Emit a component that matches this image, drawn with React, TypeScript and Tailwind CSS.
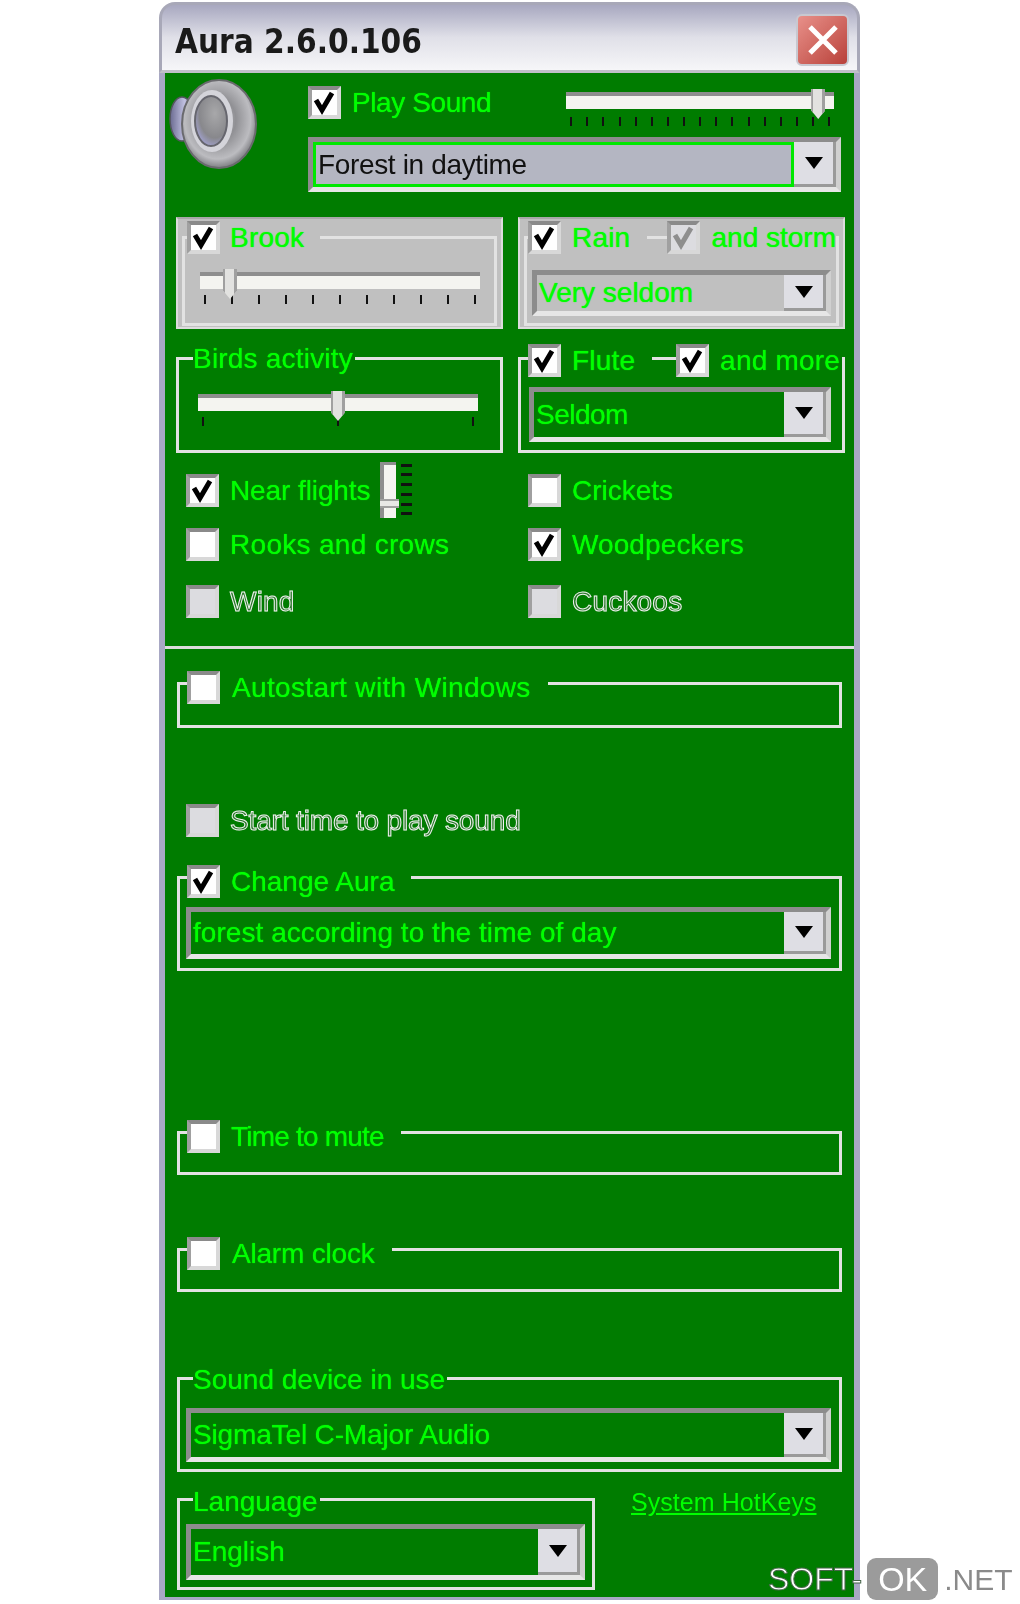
import React from "react";

const G = "bg-[#007c00]";
const S = "bg-[#c0c0c0]";

function Check({ on, disabled, gray }: { on?: boolean; disabled?: boolean; gray?: boolean }) {
  return (
    <div className={`w-[33px] h-[33px] flex-none flex items-center justify-center border-[4px] border-t-[#8a8a8a] border-l-[#a0a0a0] border-b-[#d8d8d8] border-r-[#d8d8d8] ${disabled || gray ? "bg-[#dcdce0]" : "bg-white"}`}>
      {on && (
        <svg width="25" height="25" viewBox="0 0 25 25">
          <path d="M4 10 L10 20 L20 3" fill="none" stroke={disabled ? "#8e8e8e" : "#000"} strokeWidth="5" />
        </svg>
      )}
    </div>
  );
}

function Label({ children, off, tr = "tracking-[0.2px]" }: { children: React.ReactNode; off?: boolean; tr?: string }) {
  return (
    <span className={`text-[28px] leading-[33px] whitespace-nowrap ${tr} ${off ? "text-[#2f7a2f] [-webkit-text-stroke:1px_#f2f2f2]" : "text-[#00ff00] [text-shadow:0_0_1px_#00ff00]"}`}>
      {children}
    </span>
  );
}

function Combo({ children, w, h, fill = "", focus, dark, tr = "" }: { children: React.ReactNode; w: string; h: string; fill?: string; focus?: boolean; dark?: boolean; tr?: string }) {
  return (
    <div className={`${w} ${h} flex items-stretch flex-none border-[5px] border-t-[#8c8c8c] border-l-[#8c8c8c] border-b-[#e6e6e6] border-r-[#d0d0d0]`}>
      <div className={`flex-1 flex items-center pl-[2px] ${fill} ${focus ? "border-[3px] border-[#00e800]" : ""}`}>
        <span className={`text-[28px] whitespace-nowrap ${tr} ${dark ? "text-[#111]" : "text-[#00ff00] [text-shadow:0_0_1px_#00ff00]"}`}>{children}</span>
      </div>
      <div className="w-[42px] flex-none flex items-center justify-center bg-[#dedee4] border-b-[3px] border-r-[3px] border-b-[#9a9a9a] border-r-[#9a9a9a]">
        <svg width="18" height="12" viewBox="0 0 18 12"><path d="M0 0 H18 L9 12 Z" fill="#000" /></svg>
      </div>
    </div>
  );
}

function Slider({ w, ticks, pos, gap = "mt-[6px]" }: { w: string; ticks: number; pos: string; gap?: string }) {
  return (
    <div className={`${w} flex-none`}>
      <div className="relative h-[17px] bg-[#f4f4f0] border-t-[4px] border-[#8e8e8e]">
        <div className={`absolute ${pos} -top-[7px] w-[14px] h-[30px] bg-[#e2e2e0] border-l-[2px] border-r-[3px] border-[#a0a0a0] [clip-path:polygon(0_0,100%_0,100%_72%,50%_100%,0_72%)]`} />
      </div>
      <div className={`flex justify-between px-[4px] ${gap}`}>
        {Array.from({ length: ticks }).map((_, i) => (
          <div key={i} className="w-[2px] h-[9px] bg-[#111]" />
        ))}
      </div>
    </div>
  );
}

function Group({ header, children, h, w = "w-[665px]", mt = "", fullHeader, hm = "-mt-[16px]", ml = "ml-[5px]" }: { header: React.ReactNode; children?: React.ReactNode; h: string; w?: string; mt?: string; fullHeader?: boolean; hm?: string; ml?: string }) {
  return (
    <div className={`${w} ${h} ${mt} flex-none border-[3px] border-[#e2e2e2]`}>
      <div className={`${hm} ${ml} h-[33px] flex items-center ${fullHeader ? "" : "w-fit"}`}>{header}</div>
      {children}
    </div>
  );
}

function Seg({ children, bg = G, cls = "" }: { children: React.ReactNode; bg?: string; cls?: string }) {
  return <div className={`flex items-center h-[33px] flex-none ${bg} ${cls}`}>{children}</div>;
}

function Item({ on, gray, text, off, extra, tr }: { on?: boolean; gray?: boolean; text: string; off?: boolean; extra?: React.ReactNode; tr?: string }) {
  return (
    <div className="flex items-center h-[33px] gap-[11px]">
      <Check on={on} gray={gray} />
      <Label off={off} tr={tr}>{text}</Label>
      {extra}
    </div>
  );
}

function Speaker() {
  return (
    <svg width="92" height="94" viewBox="0 0 92 94" className="flex-none">
      <defs>
        <radialGradient id="cone" cx="0.48" cy="0.45" r="0.62">
          <stop offset="0" stopColor="#c0c0c4" />
          <stop offset="0.4" stopColor="#909094" />
          <stop offset="0.72" stopColor="#bcbcc0" />
          <stop offset="1" stopColor="#55565a" />
        </radialGradient>
        <radialGradient id="cap" cx="0.62" cy="0.35" r="0.75">
          <stop offset="0" stopColor="#a8a8aa" />
          <stop offset="0.65" stopColor="#88888c" />
          <stop offset="1" stopColor="#a8a8e0" />
        </radialGradient>
        <linearGradient id="back" x1="0" y1="0" x2="1" y2="0">
          <stop offset="0" stopColor="#6a6a90" />
          <stop offset="0.6" stopColor="#c0c0e0" />
          <stop offset="1" stopColor="#9090b0" />
        </linearGradient>
      </defs>
      <ellipse cx="13" cy="42" rx="12" ry="22" fill="url(#back)" stroke="#55555f" strokeWidth="1.5" />
      <ellipse cx="50" cy="47" rx="37" ry="44" fill="url(#cone)" stroke="#6a6a6e" strokeWidth="2" />
      <ellipse cx="43" cy="44" rx="21" ry="31" fill="#d4d4da" />
      <ellipse cx="42" cy="44" rx="16" ry="25" fill="url(#cap)" stroke="#66666e" strokeWidth="2" />
    </svg>
  );
}

export default function App() {
  return (
    <div className="relative w-[1020px] h-[1604px] bg-white overflow-hidden font-['Liberation_Sans',sans-serif]">
      <div className="ml-[159px] pt-[2px] w-[701px] blur-[0.5px]">
        <div className="h-[71px] rounded-t-[16px] border-x-[3px] border-t-[3px] border-[#a8a8b8] bg-gradient-to-b from-[#a8a8c0] via-[#e0e0e8] to-[#f6f6f8] flex items-center justify-between pl-[13px] pr-[8px] border-b-[3px] border-b-[#c0c0c8]">
          <span className="font-['DejaVu_Sans',sans-serif] font-bold text-[33px] [font-stretch:condensed] tracking-[0px] text-[#1a1a1a] pt-[8px]">Aura 2.6.0.106</span>
          <div className="w-[53px] h-[52px] rounded-[6px] bg-gradient-to-br from-[#e8908a] to-[#b8403a] border-[2px] border-[#c8c8d0] flex items-center justify-center mt-[4px]">
            <svg width="34" height="34" viewBox="0 0 34 34"><path d="M4 4 L30 30 M30 4 L4 30" stroke="#fff" strokeWidth="5" /></svg>
          </div>
        </div>

        <div className={`h-[1527px] ${G} border-x-[6px] border-b-[3px] border-[#a8a8c4] pl-[11px] pr-[9px]`}>
          {/* sound */}
          <div className="flex pt-[4px] -ml-[7px] h-[117px]">
            <Speaker />
            <div className="ml-[47px] flex-1">
              <div className="flex items-start mt-[5px]">
                <div className="mt-[4px]"><Item on text="Play Sound" tr="tracking-[-0.4px]" /></div>
                <div className="ml-[75px] mt-[10px]">
                  <Slider w="w-[268px]" ticks={17} pos="right-[9px]" gap="mt-[8px]" />
                </div>
              </div>
              <div className="mt-[11px]">
                <Combo w="w-[533px]" h="h-[55px]" fill="bg-[#b4b6c2]" focus dark tr="tracking-[-0.35px]">Forest in daytime</Combo>
              </div>
            </div>
          </div>

          {/* first row of groups */}
          <div className="flex justify-between mt-[27px]">
            <div className={`${S} w-[327px] h-[112px] pt-[17px] px-[4px] border-[2px] border-[#dcdcdc] border-t-[#a8a8a8]`}>
              <Group w="w-full" h="h-[90px]" hm="-mt-[18px]" ml="ml-[2px]" header={<><Seg bg={S}><Check on /></Seg><Seg bg={S} cls="pl-[10px] pr-[16px]"><Label>Brook</Label></Seg></>}>
                <div className="ml-[15px] mt-[18px]"><Slider w="w-[280px]" ticks={11} pos="left-[23px]" /></div>
              </Group>
            </div>
            <div className={`${S} w-[327px] h-[112px] pt-[17px] px-[4px] border-[2px] border-[#dcdcdc] border-t-[#a8a8a8]`}>
              <Group w="w-full" h="h-[90px]" fullHeader hm="-mt-[18px]" ml="ml-[1px]" header={<><Seg bg={S}><Check on /></Seg><Seg bg={S} cls="pl-[11px] pr-[17px]"><Label>Rain</Label></Seg><div className="w-[22px]" /><Seg bg={S}><Check on disabled /></Seg><Seg bg={S} cls="pl-[12px]"><Label tr="tracking-[0px]">and storm</Label></Seg></>}>
                <div className="ml-[5px] mt-[16px]">
                  <Combo w="w-[299px]" h="h-[46px]" fill={S}>Very seldom</Combo>
                </div>
              </Group>
            </div>
          </div>

          {/* second row of groups */}
          <div className="flex justify-between mt-[28px]">
            <Group w="w-[327px]" h="h-[96px]" ml="ml-[6px]" hm="-mt-[18px]" header={<Seg cls="ml-[8px] pr-[2px]"><Label>Birds activity</Label></Seg>}>
              <div className="ml-[19px] mt-[19px]"><Slider w="w-[280px]" ticks={3} pos="left-[133px]" /></div>
            </Group>
            <Group w="w-[327px]" h="h-[96px]" fullHeader ml="ml-[7px]" header={<><Seg><Check on /></Seg><Seg cls="pl-[11px] pr-[17px]"><Label>Flute</Label></Seg><div className="w-[28px]" /><Seg><Check on /></Seg><Seg cls="pl-[11px] pr-[2px]"><Label>and more</Label></Seg></>}>
              <div className="ml-[8px] mt-[10px]">
                <Combo w="w-[302px]" h="h-[55px]" tr="tracking-[-0.5px]">Seldom</Combo>
              </div>
            </Group>
          </div>

          {/* check rows */}
          <div className="grid grid-cols-[342px_1fr] pl-[10px] mt-[21px]">
            <Item on text="Near flights" tr="tracking-[-0.1px]" extra={
              <div className="flex h-[56px] items-stretch -ml-[1px] gap-[5px] -mt-[2px]">
                <div className="relative w-[16px] bg-[#f4f4f0] border-l-[4px] border-t-[3px] border-[#8e8e8e]">
                  <div className="absolute -left-[4px] -right-[3px] top-[34px] h-[9px] bg-[#e8e8e6] border-y-[2px] border-[#a0a0a0]" />
                </div>
                <div className="flex flex-col justify-between w-[11px] py-[2px]">
                  {Array.from({ length: 6 }).map((_, i) => <div key={i} className="h-[3px] w-full bg-[#111]" />)}
                </div>
              </div>
            } />
            <Item text="Crickets" tr="tracking-[0px]" />
            <div className="mt-[21px]"><Item text="Rooks and crows" tr="tracking-[0.3px]" /></div>
            <div className="mt-[21px]"><Item on text="Woodpeckers" tr="tracking-[0.1px]" /></div>
            <div className="mt-[24px]"><Item gray off text="Wind" /></div>
            <div className="mt-[24px]"><Item gray off text="Cuckoos" /></div>
          </div>

          <div className="-ml-[11px] -mr-[9px] mt-[28px] h-[3px] bg-[#dcdcdc]" />

          <div className="ml-[1px]">
            <Group mt="mt-[33px]" h="h-[46px]" hm="-mt-[14px]" header={<><Seg cls="ml-[2px]"><Check /></Seg><Seg cls="pl-[12px] pr-[17px]"><Label tr="tracking-[0.35px]">Autostart with Windows</Label></Seg></>} />
          </div>

          <div className="mt-[76px] pl-[10px]"><Item gray off text="Start time to play sound" tr="tracking-[-0.15px]" /></div>

          <div className="ml-[1px]">
            <Group mt="mt-[39px]" h="h-[95px]" hm="-mt-[14px]" header={<><Seg cls="ml-[2px]"><Check on /></Seg><Seg cls="pl-[11px] pr-[17px]"><Label tr="tracking-[0px]">Change Aura</Label></Seg></>}>
              <div className="ml-[6px] mt-[9px]">
                <Combo w="w-[645px]" h="h-[52px]" tr="tracking-[0.05px]">forest according to the time of day</Combo>
              </div>
            </Group>

            <Group mt="mt-[160px]" h="h-[44px]" hm="-mt-[14px]" header={<><Seg cls="ml-[2px]"><Check /></Seg><Seg cls="pl-[11px] pr-[17px]"><Label tr="tracking-[-0.8px]">Time to mute</Label></Seg></>} />

            <Group mt="mt-[73px]" h="h-[44px]" hm="-mt-[14px]" header={<><Seg cls="ml-[2px]"><Check /></Seg><Seg cls="pl-[12px] pr-[17px]"><Label tr="tracking-[-0.2px]">Alarm clock</Label></Seg></>} />

            <Group mt="mt-[85px]" h="h-[95px]" hm="-mt-[17px]" header={<Seg cls="ml-[8px] pr-[2px]"><Label tr="tracking-[0px]">Sound device in use</Label></Seg>}>
              <div className="ml-[6px] mt-[12px]">
                <Combo w="w-[645px]" h="h-[54px]" tr="tracking-[-0.15px]">SigmaTel C-Major Audio</Combo>
              </div>
            </Group>

            <div className="flex mt-[26px]">
              <Group w="w-[418px]" h="h-[92px]" header={<Seg cls="ml-[8px] pr-[2px]"><Label tr="tracking-[0px]">Language</Label></Seg>}>
                <div className="ml-[6px] mt-[6px]">
                  <Combo w="w-[399px]" h="h-[56px]">English</Combo>
                </div>
              </Group>
              <a className="ml-[36px] -mt-[11px] text-[25px] leading-[30px] h-fit text-[#00ff00] underline whitespace-nowrap tracking-[0.05px]">System HotKeys</a>
            </div>
          </div>
        </div>
      </div>

      <div className="absolute left-[768px] top-[1558px] flex items-center h-[42px]">
        <span className="text-[32px] text-white [-webkit-text-stroke:1px_#47654a]">SOFT-</span>
        <span className="ml-[5px] w-[71px] h-[42px] rounded-[9px] bg-[#9b9b9b] text-white text-[34px] flex items-center justify-center">OK</span>
        <span className="ml-[6px] text-[30px] text-[#8a8a8a]">.NET</span>
      </div>
    </div>
  );
}
